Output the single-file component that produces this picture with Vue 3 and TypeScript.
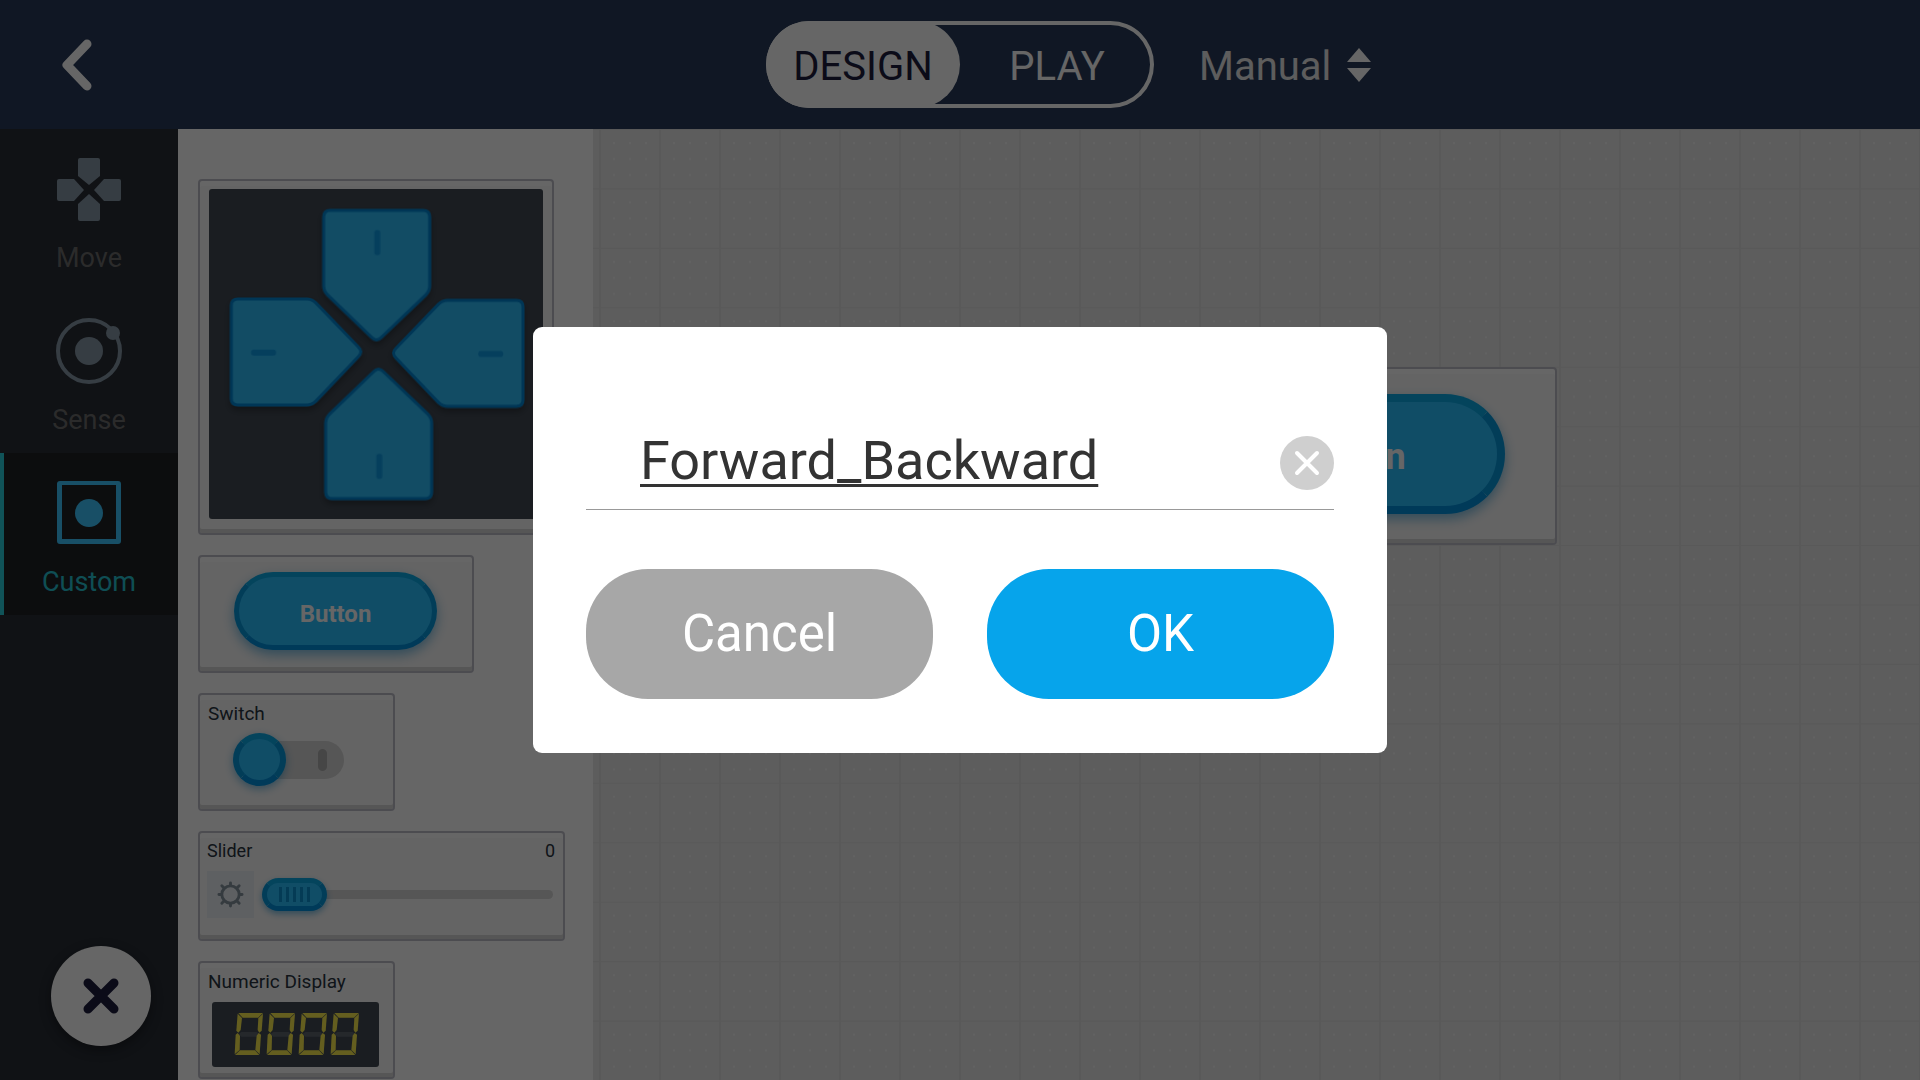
<script setup lang="ts">
import { ref } from 'vue'

type Mode = 'DESIGN' | 'PLAY'

const modes: Mode[] = ['DESIGN', 'PLAY']
const mode = ref<Mode>('DESIGN')
const category = ref('Custom')
const control = ref('Manual')
const switchOn = ref(false)
const level = ref(0)
const widgetName = ref('Forward_Backward')

const arm =
  'M364 64H642Q662 64 662 84V290Q662 306 650 318L517 445Q502 460 488 445L356 318Q344 306 344 290V84Q344 64 364 64Z'
const armTransforms = [
  '',
  'translate(6 993) scale(1 -1)',
  'matrix(0 1 1 0 3 -14)',
  'matrix(0 1 -1 0 1006 -10)',
]

const digitOffsets = [0, 96, 192, 288]
const litSegments = [
  '79,33 153,33 138,47 92,47',
  '77,35 90,48 86,84 79,92 73,86',
  '153,35 149,86 142,92 137,84 139,48',
  '71,98 77,93 84,101 83,144 68,157',
  '147,98 143,157 130,144 134,101 140,93',
  '69,159 142,159 129,145 84,145',
]
</script>

<template>
  <div class="app">
    <header class="topbar">
      <button class="back" type="button" aria-label="Back">
        <svg width="30" height="52" viewBox="0 0 30 52" fill="none">
          <path d="M25 5 5 26 25 47" stroke="#fff" stroke-width="9" stroke-linecap="round" stroke-linejoin="round" />
        </svg>
      </button>
      <div class="modes">
        <button
          v-for="m in modes"
          :key="m"
          type="button"
          class="mode"
          :class="{ active: mode === m }"
          @click="mode = m"
        >{{ m }}</button>
      </div>
      <div class="picker">
        <select v-model="control" aria-label="Control mode">
          <option>Manual</option>
        </select>
        <svg width="24" height="34" viewBox="0 0 24 34" fill="#fff">
          <path d="M12 0 24 14H0Z" />
          <path d="M12 34 0 20H24Z" />
        </svg>
      </div>
    </header>

    <div class="workspace">
      <nav class="sidebar">
        <button class="tab" :class="{ active: category === 'Move' }" type="button" @click="category = 'Move'">
          <svg width="64" height="64" viewBox="0 0 64 64" fill="currentColor">
            <path d="M23 1H41Q43 1 43 3V19L32 28 21 19V3Q21 1 23 1Z" />
            <path d="M23 64H41Q43 64 43 62V47L32 37 21 47V62Q21 64 23 64Z" />
            <path d="M0 24Q0 22 2 22H17L27 33 17 44H2Q0 44 0 42Z" />
            <path d="M64 24Q64 22 62 22H47L37 33 47 44H62Q64 44 64 42Z" />
          </svg>
          <span>Move</span>
        </button>
        <button class="tab" :class="{ active: category === 'Sense' }" type="button" @click="category = 'Sense'">
          <svg width="64" height="64" viewBox="0 0 64 64" fill="currentColor">
            <circle cx="32" cy="32" r="31" fill="none" stroke="currentColor" stroke-width="4" />
            <circle cx="32" cy="32" r="14" />
            <circle cx="56" cy="14" r="7" />
          </svg>
          <span>Sense</span>
        </button>
        <button class="tab" :class="{ active: category === 'Custom' }" type="button" @click="category = 'Custom'">
          <svg width="64" height="64" viewBox="0 0 64 64" fill="currentColor">
            <path fill-rule="evenodd" d="M3 0H61Q64 0 64 3V60Q64 63 61 63H3Q0 63 0 60V3Q0 0 3 0ZM5 4V58H59V4Z" />
            <circle cx="32" cy="32" r="14" />
          </svg>
          <span>Custom</span>
        </button>
        <button class="close" type="button" aria-label="Close">
          <svg width="36" height="36" viewBox="0 0 36 36">
            <path d="M5 5 31 31M31 5 5 31" stroke="#1c1c3c" stroke-width="9" stroke-linecap="round" />
          </svg>
        </button>
      </nav>

      <section class="palette" aria-label="Custom widgets">
        <div class="card dpad">
          <svg width="334" height="330" viewBox="0 0 1002 990" role="img" aria-label="Direction pad">
            <defs>
              <filter id="arm-shadow" x="-10%" y="-10%" width="120%" height="120%">
                <feDropShadow dx="0" dy="12" stdDeviation="10" flood-color="#000" flood-opacity="0.3" />
              </filter>
            </defs>
            <rect width="1002" height="990" rx="9" fill="#424a54" />
            <g filter="url(#arm-shadow)">
              <g v-for="t in armTransforms" :key="t" :transform="t">
                <path :d="arm" fill="#2dbdfb" stroke="#0288d6" stroke-width="9" />
                <rect x="496" y="123" width="18" height="75" rx="8" fill="#109fe8" />
              </g>
            </g>
          </svg>
        </div>

        <div class="card button-card">
          <button class="pill" type="button">Button</button>
        </div>

        <div class="card switch-card">
          <label class="caption" for="switch">Switch</label>
          <input id="switch" v-model="switchOn" class="switch" type="checkbox" role="switch" />
        </div>

        <div class="card slider-card">
          <div class="slider-head">
            <label for="slider">Slider</label>
            <output for="slider">{{ level }}</output>
          </div>
          <div class="slider-row">
            <span class="gear">
              <svg width="27" height="27" viewBox="0 0 28 28" fill="none" stroke="#85939e" stroke-width="3" stroke-linecap="round">
                <circle cx="14" cy="14" r="9" />
                <path d="M14 2V4M14 24V26M2 14H4M24 14H26M5 5 7 7M21 21 23 23M5 23 7 21M21 7 23 5" />
              </svg>
            </span>
            <input id="slider" v-model.number="level" class="range" type="range" min="0" max="100" />
          </div>
        </div>

        <div class="card numeric-card">
          <span class="caption">Numeric Display</span>
          <svg class="display" width="167" height="65" viewBox="0 0 501 195" role="img" aria-label="0000">
            <rect width="501" height="195" rx="9" fill="#424a54" />
            <g v-for="x in digitOffsets" :key="x" :transform="`translate(${x} 0)`">
              <polygon points="80,96 88,90 134,90 142,96 134,104 88,104" fill="#5c646d" />
              <polygon v-for="s in litSegments" :key="s" :points="s" fill="#fbec4e" />
            </g>
          </svg>
        </div>
      </section>

      <main class="canvas">
        <svg class="grid" aria-hidden="true">
          <defs>
            <pattern id="cell" x="6" y="0" width="60" height="6.25%" patternUnits="userSpaceOnUse">
              <path d="M1 0V60M0 0H60" stroke="#dedede" stroke-width="2" />
              <g fill="#f5f5f5">
                <template v-for="y in [13, 29, 45]" :key="y">
                  <rect v-for="x in [14, 30, 46]" :key="x" :x="x" :y="y" width="2" height="2" />
                </template>
              </g>
            </pattern>
          </defs>
          <rect width="100%" height="100%" fill="url(#cell)" />
        </svg>
        <div class="card placed">
          <button class="pill large" type="button">Button</button>
        </div>
      </main>
    </div>

    <div class="overlay">
      <form class="dialog" role="dialog" aria-modal="true" aria-label="Widget name" @submit.prevent>
        <div class="field">
          <input v-model="widgetName" type="text" aria-label="Name" spellcheck="false" />
          <button class="clear" type="button" aria-label="Clear" @click="widgetName = ''">
            <svg width="28" height="28" viewBox="0 0 28 28">
              <path d="M4 4 24 24M24 4 4 24" stroke="#fff" stroke-width="4" stroke-linecap="round" />
            </svg>
          </button>
        </div>
        <div class="actions">
          <button class="cancel" type="button">Cancel</button>
          <button class="ok" type="submit">OK</button>
        </div>
      </form>
    </div>
  </div>
</template>

<style>
body {
  margin: 0;
}
</style>

<style scoped>
* {
  box-sizing: border-box;
}

svg {
  display: block;
  flex: none;
}

button,
input,
select {
  margin: 0;
  padding: 0;
  border: 0;
  background: none;
  font: inherit;
  color: inherit;
  outline: none;
}

.app {
  display: flex;
  flex-direction: column;
  height: 100vh;
  overflow: hidden;
  font-family: Roboto, "Liberation Sans", sans-serif;
  color: #283440;
}

/* top bar */
.topbar {
  display: grid;
  grid-template-columns: 1fr auto 1fr;
  align-items: center;
  flex: none;
  height: 129px;
  background: #283a5a;
  font-size: 40px;
  line-height: 48px;
  color: #fff;
}

.back {
  justify-self: start;
  margin-left: 62px;
}

.modes {
  display: flex;
  height: 87px;
  border-radius: 44px;
  box-shadow: inset 0 0 0 4px #fff;
}

.mode {
  width: 194px;
  padding-top: 4px;
  border-radius: 44px;
}

.mode.active {
  background: #fff;
  color: #1c1c3c;
}

.picker {
  display: flex;
  align-items: center;
  gap: 15px;
  margin-left: 45px;
  color: #e8e8e8;
}

.picker select {
  padding-top: 4px;
  appearance: none;
}

/* side navigation */
.workspace {
  display: flex;
  flex: 1;
  min-height: 0;
}

.sidebar {
  display: flex;
  flex-direction: column;
  flex: none;
  width: 178px;
  background: #282d35;
}

.tab {
  display: flex;
  flex-direction: column;
  align-items: center;
  justify-content: flex-start;
  gap: 21px;
  flex: none;
  height: 162px;
  padding-top: 28px;
  font-size: 27px;
  line-height: 32px;
  color: #6c6c6c;
}

.tab svg {
  color: #8798a7;
  overflow: visible;
}

.tab.active {
  background: #1e2124;
  box-shadow: inset 4px 0 #28d0dc;
  color: #26c3d2;
}

.tab.active svg {
  color: #3cc6ff;
}

.close {
  display: grid;
  place-items: center;
  width: 100px;
  height: 100px;
  margin: auto 0 34px 51px;
  border-radius: 50%;
  background: #fff;
  box-shadow: 0 4px 12px rgba(0, 0, 0, 0.4);
}

/* widget palette */
.palette {
  display: flex;
  flex-direction: column;
  align-items: flex-start;
  gap: 20px;
  flex: none;
  width: 415px;
  padding: 50px 20px 0;
  background: #fff;
  overflow: hidden;
}

.card {
  flex: none;
  height: 118px;
  border: 2px solid #bfbfc9;
  border-radius: 4px;
  background: #fafafa;
  box-shadow: inset 0 -4px #d8d8d6, inset 0 5px #fff;
}

.dpad {
  width: 356px;
  height: 356px;
  padding: 8px 9px;
}

.button-card {
  display: flex;
  justify-content: center;
  align-items: flex-start;
  width: 276px;
  padding: 15px 1px 0 0;
}

.pill {
  width: 203px;
  height: 78px;
  padding-top: 6px;
  border: 5px solid;
  border-color: #0aaae6 #0699dc #0091de;
  border-radius: 39px;
  background: #2ac0ff;
  box-shadow: 0 5px 12px rgba(0, 130, 200, 0.5);
  font-size: 24px;
  font-weight: 700;
  line-height: 28px;
  color: #fff;
}

.switch-card,
.numeric-card {
  display: flex;
  flex-direction: column;
  align-items: flex-start;
  width: 197px;
  padding-top: 7px;
}

.caption {
  margin-left: 8px;
  font-size: 19px;
  line-height: 24px;
}

.switch {
  display: grid;
  grid-template: 53px / 53px 58px;
  align-items: center;
  appearance: none;
  width: 111px;
  height: 53px;
  margin: 7px 0 0 33px;
}

.switch::before {
  content: "";
  grid-area: 1 / 1 / 2 / 3;
  height: 38px;
  margin-left: 10px;
  border-radius: 19px;
  background:
    radial-gradient(#afafaf 0 4px, transparent 5px) 75px 8px / 9px 9px no-repeat,
    radial-gradient(#afafaf 0 4px, transparent 5px) 75px 21px / 9px 9px no-repeat,
    linear-gradient(#afafaf, #afafaf) 75px 12px / 9px 14px no-repeat #d7d7d7;
}

.switch::after {
  content: "";
  grid-area: 1 / 1;
  height: 53px;
  box-sizing: border-box;
  border: 6px solid;
  border-color: #0aaae6 #0699dc #0091de;
  border-radius: 50%;
  background: #2ac0ff;
  box-shadow: 0 3px 8px rgba(0, 130, 200, 0.5);
}

.slider-card {
  width: 367px;
  height: 110px;
  padding: 6px 8px 0 7px;
}

.slider-head {
  display: flex;
  justify-content: space-between;
  font-size: 18px;
  line-height: 24px;
}

.slider-row {
  display: flex;
  align-items: center;
  gap: 8px;
  margin-top: 8px;
  padding-right: 2px;
}

.gear {
  display: grid;
  place-items: center;
  flex: none;
  width: 47px;
  height: 47px;
  background: #ebf0f5;
}

.range {
  flex: 1;
  min-width: 0;
  height: 33px;
  appearance: none;
}

.range::-webkit-slider-runnable-track {
  height: 9px;
  border-radius: 5px;
  background: #d7d7d7;
}

.range::-webkit-slider-thumb {
  appearance: none;
  box-sizing: border-box;
  width: 65px;
  height: 33px;
  margin-top: -12px;
  border: 5px solid;
  border-color: #0aaae6 #0699dc #0091de;
  border-radius: 17px;
  background:
    repeating-linear-gradient(90deg, #0a94d4 0 3px, transparent 3px 7px) 12px 4px / 31px 15px no-repeat #2ac0ff;
  box-shadow: 0 3px 6px rgba(0, 130, 200, 0.5);
}

.numeric-card .display {
  margin: 8px 0 0 12px;
}

/* canvas */
.canvas {
  position: relative;
  flex: 1;
  min-width: 0;
  background: #e8e8e8;
}

.grid {
  width: 100%;
  height: 100%;
}

.placed {
  position: absolute;
  top: 238px;
  left: 550px;
  display: flex;
  justify-content: center;
  width: 414px;
  height: 178px;
  padding: 25px 0 0 4px;
}

.pill.large {
  width: 306px;
  height: 120px;
  border-width: 8px;
  border-radius: 60px;
  font-size: 36px;
  line-height: 42px;
}

/* rename dialog */
.overlay {
  position: fixed;
  inset: 0;
  display: grid;
  place-items: center;
  background: rgba(0, 0, 0, 0.6);
}

.dialog {
  width: 854px;
  max-width: 100%;
  padding: 90px 53px 54px;
  border-radius: 9px;
  background: #fff;
}

.field {
  display: flex;
  align-items: center;
  height: 93px;
  padding-left: 54px;
  border-bottom: 1px solid #999;
}

.field input {
  flex: 1;
  min-width: 0;
  height: 72px;
  margin-bottom: 4px;
  font-size: 54px;
  line-height: 72px;
  color: #333;
  text-decoration: underline 3px;
  text-decoration-skip-ink: none;
  text-underline-offset: 5px;
}

.clear {
  display: grid;
  place-items: center;
  flex: none;
  width: 54px;
  height: 54px;
  border-radius: 50%;
  background: #cfcfcf;
}

.actions {
  display: flex;
  gap: 54px;
  margin-top: 59px;
}

.actions button {
  flex: 1;
  height: 130px;
  border-radius: 62px;
  font-size: 51px;
  line-height: 60px;
  color: #fff;
}

.actions .cancel {
  background: #a7a7a7;
}

.actions .ok {
  background: #06a4eb;
}
</style>
